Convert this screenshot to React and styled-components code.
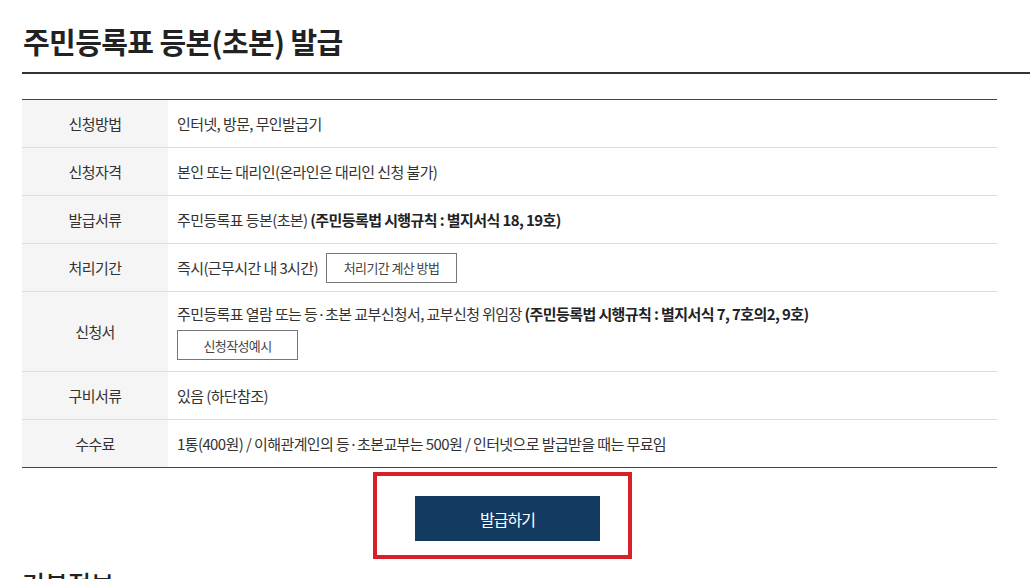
import React from 'react';
import styled, { createGlobalStyle } from 'styled-components';

const GlobalStyle = createGlobalStyle`
  body {
    margin: 0;
    background: #fff;
    font-family: "Noto Sans CJK KR", "Noto Sans", sans-serif;
    color: #333;
  }
`;

const Page = styled.div`
  padding-left: 22px;
  overflow: hidden;
  height: 579px;
`;

const Title = styled.h1`
  margin: 0;
  padding: 22px 0 12px 1px;
  line-height: 38px;
  font-size: 29px;
  font-weight: 700;
  letter-spacing: -0.6px;
  color: #222;
  border-bottom: 2px solid #333;
`;

const InfoTable = styled.table`
  width: 975px;
  margin-top: 25px;
  border-collapse: collapse;
  border-top: 1px solid #444;
  border-bottom: 1px solid #444;
  font-size: 15px;
  letter-spacing: -0.6px;
`;

const Row = styled.tr`
  border-bottom: 1px solid #ddd;
  &:last-child {
    border-bottom: none;
  }
`;

const Label = styled.th`
  width: 146px;
  height: ${p => p.$tall ? '79px' : '47px'};
  padding: 0;
  background: #f5f5f5;
  font-weight: 400;
  color: #333;
  text-align: center;
  vertical-align: middle;
`;

const Cell = styled.td`
  padding: 0 0 0 9px;
  vertical-align: middle;
  color: #333;
`;

const Line = styled.div`
  display: flex;
  align-items: center;
  gap: 8px;
`;

const Stack = styled.div`
  display: flex;
  flex-direction: column;
  align-items: flex-start;
  gap: 6px;
`;

const Strong = styled.b`
  font-weight: 700;
  color: #222;
`;

const SmallButton = styled.button`
  width: ${p => p.$w}px;
  height: 30px;
  padding: 0;
  background: #fff;
  border: 1px solid #777;
  font-family: inherit;
  font-size: 13px;
  letter-spacing: -0.6px;
  color: #444;
  cursor: pointer;
`;

const Highlight = styled.div`
  display: inline-flex;
  margin: 4px 0 0 351px;
  padding: 20px 28px 14px 38px;
  border: 4px solid #d8202b;
`;

const IssueButton = styled.button`
  width: 185px;
  height: 45px;
  background: #133a60;
  border: none;
  color: #fff;
  font-family: inherit;
  font-size: 16px;
  letter-spacing: -1px;
  cursor: pointer;
`;

const SubTitle = styled.h2`
  margin: 9px 0 0;
  font-size: 25px;
  font-weight: 500;
  color: #222;
  line-height: 30px;
`;

const rows = [
  { label: '신청방법', content: '인터넷, 방문, 무인발급기' },
  { label: '신청자격', content: '본인 또는 대리인(온라인은 대리인 신청 불가)' },
  {
    label: '발급서류',
    content: <>주민등록표 등본(초본) <Strong>(주민등록법 시행규칙 : 별지서식 18, 19호)</Strong></>,
  },
  {
    label: '처리기간',
    content: (
      <Line>
        즉시(근무시간 내 3시간)
        <SmallButton $w={131}>처리기간 계산 방법</SmallButton>
      </Line>
    ),
  },
  {
    label: '신청서',
    tall: true,
    content: (
      <Stack>
        <span>
          주민등록표 열람 또는 등·초본 교부신청서, 교부신청 위임장{' '}
          <Strong>(주민등록법 시행규칙 : 별지서식 7, 7호의2, 9호)</Strong>
        </span>
        <SmallButton $w={121}>신청작성예시</SmallButton>
      </Stack>
    ),
  },
  { label: '구비서류', content: '있음 (하단참조)' },
  {
    label: '수수료',
    content: '1통(400원) / 이해관계인의 등·초본교부는 500원 / 인터넷으로 발급받을 때는 무료임',
  },
];

export default function App() {
  return (
    <>
      <GlobalStyle />
      <Page>
        <Title>주민등록표 등본(초본) 발급</Title>
        <InfoTable>
          <tbody>
            {rows.map(r => (
              <Row key={r.label}>
                <Label $tall={r.tall}>{r.label}</Label>
                <Cell>{r.content}</Cell>
              </Row>
            ))}
          </tbody>
        </InfoTable>
        <Highlight>
          <IssueButton>발급하기</IssueButton>
        </Highlight>
        <SubTitle>기본정보</SubTitle>
      </Page>
    </>
  );
}
